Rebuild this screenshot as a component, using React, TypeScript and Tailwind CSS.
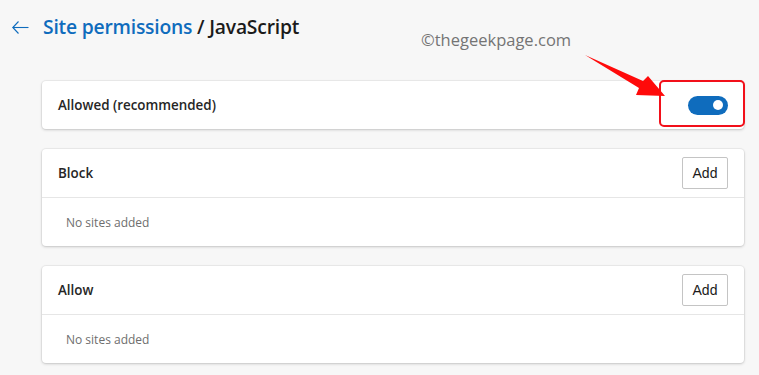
import React from "react";

function Card({ title }: { title: string }) {
  return (
    <div className="bg-white rounded-[4px] shadow-[0_0_0_1px_rgba(0,0,0,0.04),0_1px_3px_rgba(0,0,0,0.18)]">
      <div className="h-[49px] flex items-center justify-between pl-4 pr-4 border-b border-[#e6e6e6]">
        <span className="text-[13.4px] font-semibold text-[#262626]">{title}</span>
        <button className="w-[46px] h-[32px] border border-[#c4c4c4] rounded-[2px] bg-white text-[14px] text-[#1b1b1b] font-['Liberation_Sans',sans-serif]">
          Add
        </button>
      </div>
      <div className="h-[48px] flex items-center pl-6 pt-[2px]">
        <span className="text-[12px] text-[#6e6e6e]">No sites added</span>
      </div>
    </div>
  );
}

export default function App() {
  return (
    <div className="w-[759px] h-[375px] bg-[#f7f7f7] relative overflow-hidden font-['Open_Sans','Noto_Sans',sans-serif]">
      <div className="h-[54px] flex items-center pl-3 gap-[14px]">
        <svg width="17" height="13" viewBox="0 0 17 13" fill="none" stroke="#0f6cbd" strokeWidth="1.1">
          <path d="M6.5 0.5 L0.8 6.5 L6.5 12.5" />
          <path d="M0.8 6.5 H16.5" />
        </svg>
        <div className="text-[19.3px] font-semibold tracking-[-0.2px]">
          <span className="text-[#0f6cbd]">Site permissions</span>
          <span className="text-[#1b1b1b]"> / JavaScript</span>
        </div>
      </div>

      <div className="pl-[42px] pr-[15px] pt-[27px] flex flex-col gap-5">
        <div className="bg-white rounded-[4px] h-[48px] flex items-center justify-between pl-4 pr-4 shadow-[0_0_0_1px_rgba(0,0,0,0.04),0_1px_3px_rgba(0,0,0,0.18)]">
          <span className="text-[13.4px] font-semibold text-[#262626]">Allowed (recommended)</span>
          <div className="w-[40px] h-[19px] rounded-full bg-[#0f6cbd] flex items-center justify-end pr-[5px]">
            <div className="w-[10px] h-[10px] rounded-full bg-white" />
          </div>
        </div>
        <Card title="Block" />
        <Card title="Allow" />
      </div>

      <div className="absolute left-[421px] top-[28px] text-[16.5px] text-[#747474] leading-[24px]">
        ©thegeekpage.com
      </div>

      <div className="absolute left-[659px] top-[80px] w-[86px] h-[47px] border-2 border-[#f2101a] rounded-[5px]" />

      <svg className="absolute left-0 top-0" width="759" height="375" viewBox="0 0 759 375">
        <polygon
          points="585,55 643,81 648,76 665,96 636,95 639,88"
          fill="#ff0a0a"
        />
      </svg>
    </div>
  );
}
